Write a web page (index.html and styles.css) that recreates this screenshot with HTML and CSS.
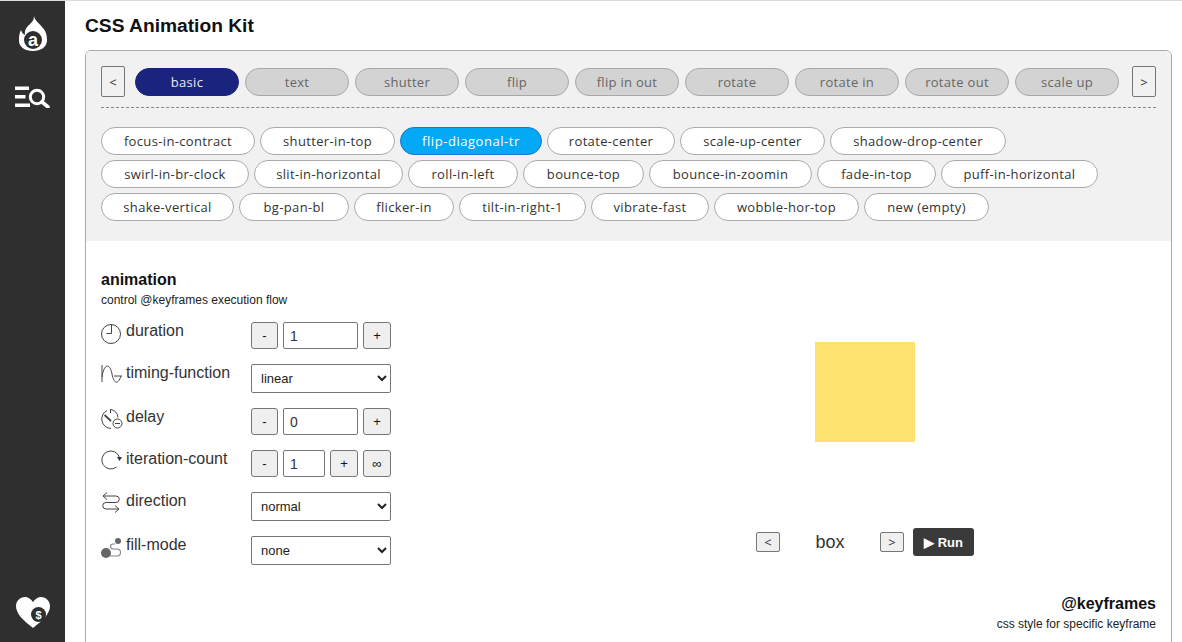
FILE: index.html
```html
<!DOCTYPE html>
<html lang="en">
<head>
<meta charset="utf-8">
<title>CSS Animation Kit</title>
<link rel="stylesheet" href="styles.css">
</head>
<body>
<div class="app">
  <aside class="sidebar">
    <div class="side-top">
      <svg class="logo" width="35" height="36" viewBox="0 0 35 36">
        <path fill="#fff" d="M19 1C20 6 24 8 27 12C31 16 32 20 32 25C32 32 26 36 18 36C10 36 4 32 4 26C4 22 4 19 6 15C7 18 8 19 10 20C9 14 13 11 16 8C18 6 19 4 19 1z"/>
        <circle cx="18" cy="25" r="9" fill="#2f2f2f"/>
        <text x="18" y="31" class="logo-a">a</text>
      </svg>
      <svg class="menu-icon" width="35" height="22" viewBox="0 0 35 22">
        <path fill="#fff" d="M0 .5h14v3.500H0zM0 9h10.500v3.500H0zM0 17.500h15V21H0z"/>
        <circle cx="22" cy="11" r="6.700" fill="none" stroke="#fff" stroke-width="3"/>
        <path d="M27 16l6 5" stroke="#fff" stroke-width="3.600" stroke-linecap="round"/>
      </svg>
    </div>
    <svg class="heart" width="34" height="31" viewBox="0 0 34 31">
      <path fill="#fff" d="M17 31C8 24 0 17 0 9 0 4 4 0 9 0c3 0 6 2 8 5 2-3 5-5 8-5 5 0 9 4 9 9 0 8-8 15-17 22z"/>
      <circle cx="22.500" cy="17.500" r="7.500" fill="#2f2f2f"/>
      <text x="22.500" y="21.500" class="heart-s">$</text>
    </svg>
  </aside>
  <main class="main">
    <h1 class="title">CSS Animation Kit</h1>
    <section class="panel">
      <div class="panel-top">
        <div class="cat-row">
          <button class="nav-btn">&lt;</button>
          <div class="cats">
            <span class="cat active">basic</span><span class="cat">text</span><span class="cat">shutter</span><span class="cat">flip</span><span class="cat">flip in out</span><span class="cat">rotate</span><span class="cat">rotate in</span><span class="cat">rotate out</span><span class="cat">scale up</span>
          </div>
          <button class="nav-btn nav-next">&gt;</button>
        </div>
        <div class="chips">
          <div class="chip-row"><span class="chip w154">focus-in-contract</span><span class="chip w135">shutter-in-top</span><span class="chip w142 active">flip-diagonal-tr</span><span class="chip w128">rotate-center</span><span class="chip w145">scale-up-center</span><span class="chip w176">shadow-drop-center</span></div>
          <div class="chip-row"><span class="chip w148">swirl-in-br-clock</span><span class="chip w149">slit-in-horizontal</span><span class="chip w110">roll-in-left</span><span class="chip w121">bounce-top</span><span class="chip w163">bounce-in-zoomin</span><span class="chip w119">fade-in-top</span><span class="chip w157">puff-in-horizontal</span></div>
          <div class="chip-row"><span class="chip w133">shake-vertical</span><span class="chip w110">bg-pan-bl</span><span class="chip w100">flicker-in</span><span class="chip w127">tilt-in-right-1</span><span class="chip w118">vibrate-fast</span><span class="chip w145">wobble-hor-top</span><span class="chip w125">new (empty)</span></div>
        </div>
      </div>
      <div class="panel-body">
        <div class="controls">
          <h2 class="sec-title">animation</h2>
          <p class="sec-sub">control @keyframes execution flow</p>
          <div class="form">
            <div class="row">
              <label class="lbl"><svg class="ic" viewBox="0 0 22 22" width="22" height="22"><circle cx="10" cy="12" r="9.500"/><path d="M10.500 3v8.500H5.500"/></svg>duration</label>
              <div class="ctl"><button class="b">-</button><input class="inp" value="1"><button class="b b-wide">+</button></div>
            </div>
            <div class="row row-sel">
              <label class="lbl"><svg class="ic" viewBox="0 0 22 22" width="22" height="22"><path d="M1 1v17M1 13C3-1 9-1 11 10C13 20 17 21 20 12M13 12h8"/></svg>timing-function</label>
              <div class="ctl"><select class="sel"><option>linear</option></select></div>
            </div>
            <div class="row">
              <label class="lbl"><svg class="ic" viewBox="0 0 22 22" width="22" height="22"><path d="M6 2.500A9.500 9.500 0 0 0 10 20.500M9.500 1v4M10 1.500a9 9 0 0 1 7 8"/><path class="needle" d="M3.500 7l6.500 6"/><circle cx="16.500" cy="15.500" r="4.500"/><path d="M14 15.500h5"/></svg>delay</label>
              <div class="ctl"><button class="b">-</button><input class="inp" value="0"><button class="b b-wide">+</button></div>
            </div>
            <div class="row">
              <label class="lbl"><svg class="ic" viewBox="0 0 22 22" width="22" height="22"><path d="M15.500 17A9 9 0 1 1 18.500 7.500"/><path class="solid" d="M16 7h5l-2.500 4z"/></svg>iteration-count</label>
              <div class="ctl"><button class="b">-</button><input class="inp" value="1"><button class="b b-wide">+</button><button class="b b-wide b-inf">∞</button></div>
            </div>
            <div class="row row-sel">
              <label class="lbl"><svg class="ic" viewBox="0 0 22 22" width="22" height="22"><path d="M6 .5L2 4l4 3.500M2 4h13a3.250 3.250 0 0 1 0 6.500H5a3.250 3.250 0 0 0 0 6.500h13M14 13.500l4 3.500-4 3.500"/></svg>direction</label>
              <div class="ctl"><select class="sel"><option>normal</option></select></div>
            </div>
            <div class="row row-sel">
              <label class="lbl"><svg class="ic" viewBox="0 0 22 22" width="22" height="22"><path class="soft" d="M9 20H16a3.500 3.500 0 0 0 0-7H12a2.500 2.500 0 0 1 0-5H14"/><circle class="grey" cx="5" cy="17" r="5"/><circle class="grey" cx="17" cy="5" r="3"/></svg>fill-mode</label>
              <div class="ctl"><select class="sel"><option>none</option></select></div>
            </div>
          </div>
        </div>
        <div class="stage">
          <div class="box"></div>
          <div class="stage-bar">
            <button class="mini">&lt;</button>
            <span class="box-name">box</span>
            <button class="mini">&gt;</button>
            <button class="run">▶ Run</button>
          </div>
          <div class="kf">
            <h2 class="sec-title">@keyframes</h2>
            <p class="sec-sub">css style for specific keyframe</p>
          </div>
        </div>
      </div>
    </section>
  </main>
</div>
</body>
</html>
```
FILE: styles.css
```css
* { box-sizing: border-box; }
html, body { margin: 0; height: 100%; overflow: hidden; background: #fff; }
body { font-family: "Liberation Sans", Arial, sans-serif; color: #222; border-top: 1px solid #dcdcdc; }
.app { display: flex; height: 641px; }
.sidebar { width: 65px; flex: none; background: #2f2f2f; display: flex; flex-direction: column; justify-content: space-between; align-items: center; padding: 14px 0 14px; }
.side-top { display: flex; flex-direction: column; align-items: center; gap: 35px; }
.logo-a { font: bold 18px "Liberation Sans", sans-serif; fill: #fff; text-anchor: middle; }
.heart-s { font: bold 11px "Liberation Sans", sans-serif; fill: #fff; text-anchor: middle; }
.main { flex: 1; padding: 0 10px 0 20px; min-width: 0; }
.title { font-size: 19.2px; line-height: 20px; font-weight: 700; color: #111; margin: 15px 0 14px; }
.panel { border: 1px solid #aaa; border-radius: 6px; height: 640px; background: #fff; overflow: hidden; }
.panel-top { background: #f1f1f1; padding: 15px 15px 20px; height: 190px; }
.cat-row { display: flex; gap: 10px; align-items: center; padding-bottom: 10px; border-bottom: 1px dashed #888; height: 42px; }
.nav-btn { width: 24px; height: 31px; padding: 0; border: 1px solid #777; border-radius: 2px; background: #f1f1f1; font: 13px "Open Sans", sans-serif; color: #333; }
.nav-next { margin-left: auto; }
.cats { display: flex; gap: 6px; }
.cat { width: 104px; height: 28px; border-radius: 14px; border: 1px solid #a8a8a8; background: #d3d3d3; color: #666; font: 13px/26px "Open Sans", sans-serif; letter-spacing: .3px; text-align: center; }
.cat.active { background: #1a237e; border-color: #1a237e; color: #e8eaf6; }
.chips { display: flex; flex-direction: column; gap: 5px; margin-top: 19px; }
.chip-row { display: flex; gap: 5px; }
.chip { height: 28px; border-radius: 14px; border: 1px solid #aaa; background: #fff; color: #333; font: 13px/26px "Open Sans", sans-serif; letter-spacing: .35px; white-space: nowrap; text-align: center; }
.chip.active { background: #03a9f4; border-color: #1976d2; color: #fff; letter-spacing: .55px; }
.w100 { width: 100px; } .w110 { width: 110px; } .w118 { width: 118px; } .w119 { width: 119px; }
.w121 { width: 121px; } .w125 { width: 125px; } .w127 { width: 127px; } .w128 { width: 128px; }
.w133 { width: 133px; } .w135 { width: 135px; } .w142 { width: 142px; } .w145 { width: 145px; }
.w148 { width: 148px; } .w149 { width: 149px; } .w154 { width: 154px; } .w157 { width: 157px; }
.w163 { width: 163px; } .w176 { width: 176px; }
.panel-body { display: flex; height: 450px; }
.controls { width: 473px; flex: none; padding: 30px 0 0 15px; }
.sec-title { font-size: 16px; line-height: 18px; font-weight: 700; color: #111; margin: 0; }
.sec-sub { font-size: 12px; line-height: 14px; color: #222; margin: 4px 0 0; }
.form { margin-top: 15px; }
.row { display: flex; height: 27px; margin-bottom: 15px; }
.row-sel { height: 29px; }
.lbl { width: 150px; display: flex; align-items: flex-start; gap: 3px; font-size: 16px; line-height: 18px; color: #333; }
.ic { fill: none; stroke: #444; stroke-width: 1; flex: none; overflow: visible; }
.ic .solid { fill: #333; stroke: none; }
.ic .grey { fill: #666; stroke: none; }
.ic .soft { stroke: #888; stroke-width: 1.2; }
.ic .needle { stroke-width: 1.8; }
.ctl { display: flex; gap: 5px; width: 140px; }
.b { flex: none; width: 27px; height: 27px; padding: 0; border: 1px solid #767676; border-radius: 3px; background: #efefef; font: 13px "Liberation Sans", sans-serif; color: #111; }
.b-wide { width: 28px; }
.inp { flex: 1; min-width: 0; height: 27px; padding: 0 6px; border: 1px solid #767676; border-radius: 2px; font: 14px "Liberation Sans", sans-serif; color: #333; background: #fff; }
.sel { width: 140px; height: 29px; padding: 0 5px; border: 1px solid #767676; border-radius: 2px; font: 13px "Liberation Sans", sans-serif; color: #222; background: #fff; }
.stage { flex: 1; display: flex; flex-direction: column; align-items: center; padding-top: 101px; }
.box { width: 100px; height: 100px; background: #ffe270; }
.stage-bar { display: flex; align-items: center; height: 28px; margin-top: 86px; }
.mini { width: 24px; height: 20px; padding: 0; border: 1px solid #777; border-radius: 2px; background: #efefef; font: 13px "Open Sans", sans-serif; color: #333; }
.box-name { width: 100px; text-align: center; font-size: 18px; color: #333; }
.run { width: 61px; height: 28px; margin-left: 9px; padding: 0; border: 0; border-radius: 3px; background: #3a3a3a; color: #fff; font: bold 13px "Liberation Sans", sans-serif; }
.kf { align-self: flex-end; text-align: right; margin: 39px 15px 0 0; }
```
